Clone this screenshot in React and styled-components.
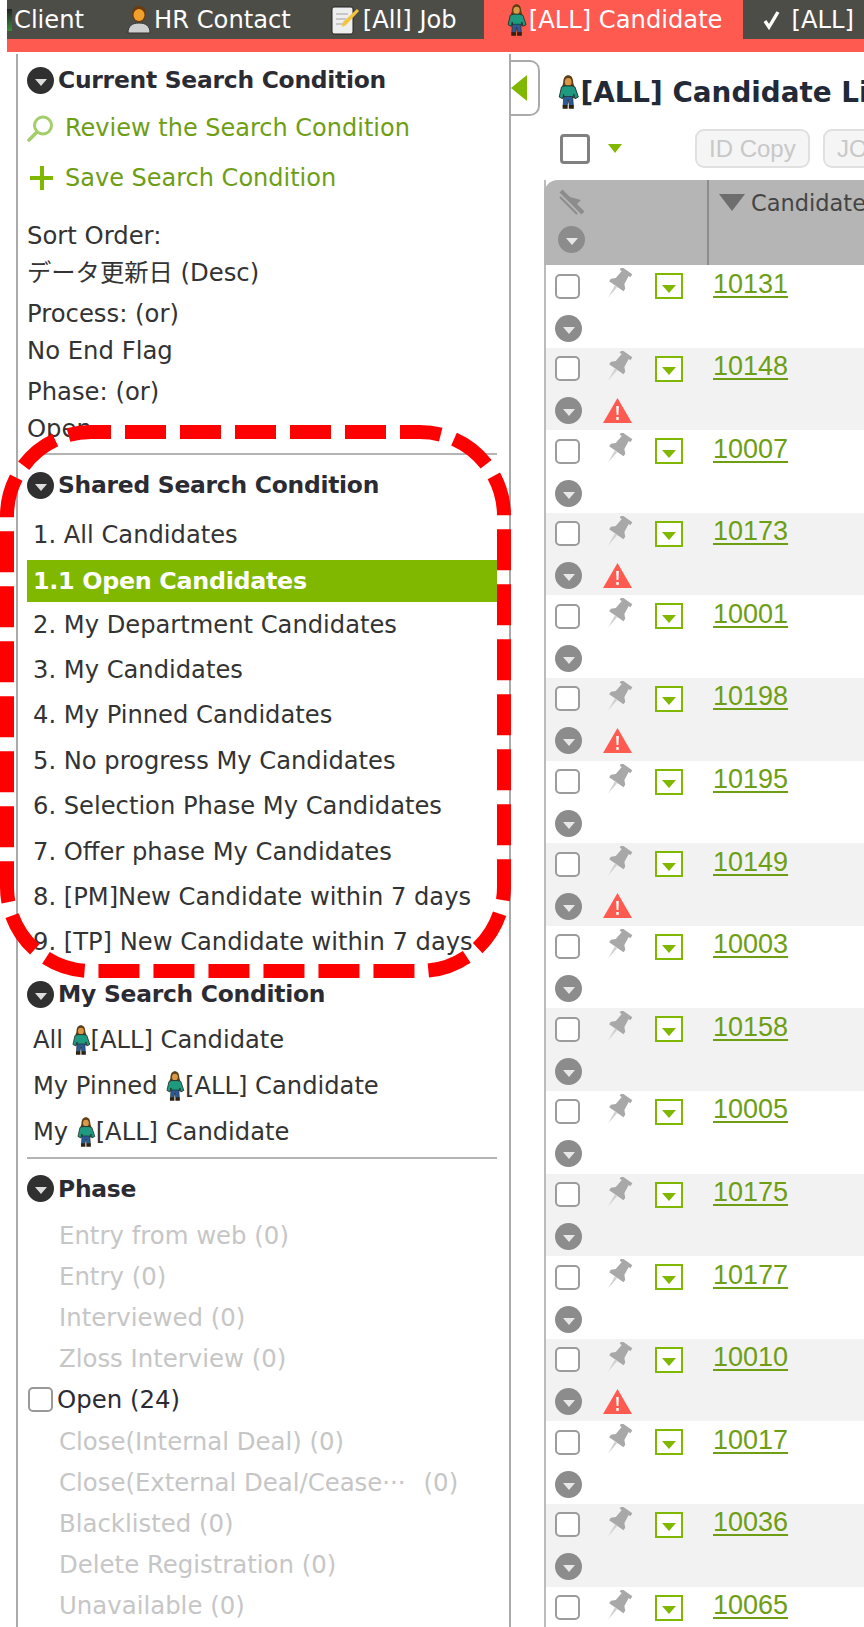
import React from "react";
import styled, { createGlobalStyle } from "styled-components";

const FONT = `"DejaVu Sans", "Noto Sans CJK JP", sans-serif`;

const GlobalStyle = createGlobalStyle`
  html, body {
    margin: 0;
    padding: 0;
    background: #fff;
  }
`;

const Page = styled.div`
  position: relative;
  width: 864px;
  height: 1627px;
  overflow: hidden;
  background: #fff;
  font-family: ${FONT};
  color: #333;
`;

/* top navigation */
const TopBar = styled.div`
  margin-left: 7px;
  border-bottom: 13px solid #ff5a50;
  background: #4d4d48;
`;

const TabRow = styled.div`
  display: flex;
  height: 39px;
  overflow: hidden;
`;

const Tab = styled.div`
  flex: none;
  display: flex;
  align-items: center;
  gap: ${(p) => p.$gap || 3}px;
  height: 39px;
  padding: 0 ${(p) => p.$right || 43}px 0 ${(p) => p.$left || 0}px;
  background: ${(p) => (p.$active ? "#ff5a50" : "transparent")};
  color: #fff;
  font-size: 24.2px;
  white-space: nowrap;
`;

const ClientMark = styled.span`
  width: 5px;
  height: 22px;
  background: linear-gradient(#222, #3a8a3a);
`;

/* layout */
const Body = styled.div`
  display: flex;
  align-items: flex-start;
`;

const Sidebar = styled.aside`
  flex: none;
  box-sizing: border-box;
  width: 495px;
  height: 1573px;
  margin: 2px 0 0 16px;
  padding: 4px 12px 0 9px;
  border-left: 2px solid #aaa;
  border-right: 2px solid #aaa;
  overflow: hidden;
`;

const Heading = styled.div`
  display: flex;
  align-items: center;
  gap: 4px;
  height: 44px;
  margin-top: ${(p) => p.$top || 0}px;
  margin-bottom: ${(p) => p.$bottom || 1}px;
  font-size: 23.4px;
  font-weight: bold;
  letter-spacing: -0.25px;
  color: #2b2b33;
  white-space: nowrap;
`;

const ToggleCircle = styled.span`
  flex: none;
  display: flex;
  align-items: center;
  justify-content: center;
  width: 27px;
  height: 27px;
  border-radius: 50%;
  background: ${(p) => p.$color || "#303030"};

  &::after {
    content: "";
    margin-top: 4px;
    border-left: 6px solid transparent;
    border-right: 6px solid transparent;
    border-top: 7px solid ${(p) => p.$arrow || "#ddd"};
  }
`;

const ActionRow = styled.div`
  display: flex;
  align-items: center;
  gap: 11px;
  height: 50px;
  color: #6e9e14;
  font-size: 24px;
  white-space: nowrap;
`;

const ConditionGroup = styled.div`
  margin-top: ${(p) => p.$top || 4}px;
`;

const ConditionLine = styled.div`
  height: 37px;
  line-height: 37px;
  font-size: 24.3px;
  white-space: nowrap;
`;

const Divider = styled.hr`
  height: 2px;
  margin: ${(p) => p.$top || 6}px 0 ${(p) => p.$bottom || 8}px;
  border: 0;
  background: #b4b4b4;
`;

const SavedRow = styled.div`
  display: flex;
  align-items: center;
  box-sizing: border-box;
  height: ${(p) => p.$h || 45.4}px;
  margin-top: ${(p) => p.$top || 0}px;
  padding-left: 6px;
  font-size: 24.2px;
  white-space: nowrap;
  ${(p) =>
    p.$active &&
    `
    background: #80b800;
    color: #fff;
    font-weight: bold;
    font-size: 23.8px;
    letter-spacing: -0.3px;
  `}
`;

const PhaseRow = styled.div`
  display: flex;
  align-items: center;
  gap: 4px;
  height: 41.2px;
  padding-left: ${(p) => (p.$enabled ? 1 : 32)}px;
  color: ${(p) => (p.$enabled ? "#2b2b33" : "#c6c6c6")};
  font-size: 24.4px;
  white-space: nowrap;
`;

const TruncGap = styled.span`
  margin-left: 18px;
`;

const CheckBox = styled.span`
  flex: none;
  box-sizing: border-box;
  display: block;
  width: ${(p) => p.$size || 25}px;
  height: ${(p) => p.$size || 25}px;
  border: ${(p) => p.$line || 2}px solid ${(p) => p.$color || "#999"};
  border-radius: ${(p) => p.$radius || 5}px;
  background: #fff;
`;

/* main column */
const Main = styled.main`
  position: relative;
  flex: 1;
  min-width: 0;
  padding: 22px 0 0 33px;
  overflow: hidden;
  height: 1553px;
`;

const CollapseHandle = styled.div`
  position: absolute;
  top: 8px;
  left: -2px;
  display: flex;
  align-items: center;
  box-sizing: border-box;
  width: 31px;
  height: 56px;
  padding-left: 2px;
  background: #fff;
  border: 2px solid #aaa;
  border-left: 0;
  border-radius: 0 10px 10px 0;

  &::before {
    content: "";
    border-top: 13px solid transparent;
    border-bottom: 13px solid transparent;
    border-right: 16px solid #80b800;
  }
`;

const TitleRow = styled.h1`
  display: flex;
  align-items: center;
  gap: 1px;
  height: 36px;
  margin: 0 0 0 13px;
  font-size: 27.8px;
  font-weight: bold;
  color: #222a38;
  white-space: nowrap;
`;

const Toolbar = styled.div`
  display: flex;
  align-items: center;
  height: 39px;
  margin: 19px 0 12px 16px;
`;

const MenuArrow = styled.span`
  margin: 0 73px 0 18px;
  border-left: 7px solid transparent;
  border-right: 7px solid transparent;
  border-top: 9px solid #80b800;
`;

const GhostButton = styled.button`
  flex: none;
  box-sizing: border-box;
  height: 39px;
  min-width: 115px;
  margin-right: 13px;
  padding: 0 12px;
  background: #f5f5f5;
  border: 2px solid #e0e0e0;
  border-radius: 9px;
  color: #c8c8c8;
  font-family: "Liberation Sans", sans-serif;
  font-size: 24px;
  text-align: left;
`;

const Table = styled.div`
  width: 320px;
  border-left: 2px solid #bbb;
  box-sizing: border-box;
`;

const HeaderRow = styled.div`
  display: flex;
  height: 85px;
  margin-left: -2px;
  background: #b5b5b5;
  border-radius: 14px 0 0 0;
`;

const HeaderIcons = styled.div`
  flex: none;
  display: flex;
  flex-direction: column;
  gap: 10px;
  box-sizing: border-box;
  width: 165px;
  padding: 8px 0 0 14px;
  border-right: 2px solid #8c8c8c;
`;

const HeaderLabel = styled.div`
  display: flex;
  gap: 6px;
  padding: 10px 0 0 10px;
  color: #444;
  font-size: 22.5px;
  white-space: nowrap;
  &::before {
    content: "";
    margin-top: 4px;
    height: 0;
    border-left: 13px solid transparent;
    border-right: 13px solid transparent;
    border-top: 17px solid #6e6e6e;
  }
`;

const Row = styled.div`
  display: flex;
  box-sizing: border-box;
  height: 82.6px;
  background: ${(p) => (p.$alt ? "#f2f2f2" : "#fff")};
`;

const RowTools = styled.div`
  flex: none;
  display: grid;
  grid-template-columns: 49px 51px 34px;
  grid-template-rows: 40px 36px;
  row-gap: 4px;
  align-items: center;
  box-sizing: border-box;
  width: 163px;
  padding: 1px 0 0 9px;
`;

const RowMenu = styled.span`
  display: flex;
  align-items: center;
  justify-content: center;
  box-sizing: border-box;
  width: 28px;
  height: 26px;
  border: 2px solid #80b800;
  background: #fff;

  &::after {
    content: "";
    margin-top: 5px;
    border-left: 7px solid transparent;
    border-right: 7px solid transparent;
    border-top: 8px solid #80b800;
  }
`;

const IdCell = styled.a`
  margin: 3.5px 0 0 4px;
  align-self: flex-start;
  color: #6e9e14;
  font-family: "Liberation Sans", sans-serif;
  font-size: 27px;
  line-height: 31px;
  text-decoration: underline;
  text-decoration-thickness: 2px;
  text-underline-offset: 3px;
`;

/* the hand drawn dashed marker on top of the sidebar */
const Marker = styled.svg`
  position: absolute;
  top: 0;
  left: 0;
  pointer-events: none;
`;

function Person({ height = 30 }) {
  return (
    <svg width={height * 0.66} height={height} viewBox="0 0 20 30" style={{ flex: "none" }}>
      <path d="M5.5 7c0-5 2-7 4.5-7s4.500 2 4.500 7l1 3h-11z" fill="#5c3f16" />
      <ellipse cx="10" cy="6" rx="3" ry="3.500" fill="#d9984a" />
      <path d="M4 10.500l3-1h6l3 1 3 9-3 1.500-1-4v3H6v-3l-1 4-3-1.500z" fill="#1f9a80" stroke="#1c2a22" strokeWidth=".8" />
      <path d="M6 19h8l.5 8h-3.500L10 22l-1 5H5.500z" fill="#2c5a96" stroke="#1c2a22" strokeWidth=".6" />
      <path d="M5 26.500h4.500v3.500H5zM10.500 26.500H15v3.500h-4.500z" fill="#2e2210" />
    </svg>
  );
}

function ContactIcon() {
  return (
    <svg width="24" height="29" viewBox="0 0 24 29" style={{ flex: "none" }}>
      <path d="M5 9c0-6 3-8 7-8s7 2 7 8c0 5-3 8-7 8S5 14 5 9z" fill="#6a3c10" />
      <ellipse cx="12" cy="10" rx="5.500" ry="6" fill="#f2a02c" />
      <path d="M1 28c0-7 4-10 11-10s11 3 11 10z" fill="#cfcfcf" stroke="#333" />
    </svg>
  );
}

function MemoIcon() {
  return (
    <svg width="28" height="30" viewBox="0 0 28 30" style={{ flex: "none" }}>
      <rect x="1" y="2" width="21" height="27" rx="2" fill="#eee" stroke="#222" />
      <path d="M5 9h12M5 14h10M5 19h8" stroke="#bbb" strokeWidth="1.500" />
      <path d="M26 4l2 2-13 14-4 2 1-5z" fill="#f2c53c" />
    </svg>
  );
}

function CheckMark() {
  return (
    <svg width="18" height="20" viewBox="0 0 18 20" style={{ flex: "none" }}>
      <path d="M2 11l4 6L15 2" fill="none" stroke="#fff" strokeWidth="3.400" />
    </svg>
  );
}

function SearchGlass() {
  return (
    <svg width="27" height="27" viewBox="0 0 27 27" style={{ flex: "none" }}>
      <circle cx="16" cy="10.500" r="8.500" fill="none" stroke="#a3cf6b" strokeWidth="3" />
      <path d="M10 17L2 25" stroke="#a3cf6b" strokeWidth="3.600" strokeLinecap="round" />
    </svg>
  );
}

function PlusMark() {
  return (
    <svg width="27" height="24" viewBox="0 0 27 24" style={{ flex: "none" }}>
      <path d="M15 0v24M3 12h23" stroke="#80b800" strokeWidth="4" />
    </svg>
  );
}

function PinMark() {
  return (
    <svg width="30" height="34" viewBox="0 0 30 34" style={{ marginTop: -2 }}>
      <g transform="rotate(35 15 14)">
        <path d="M8.500 0h13v3.500h-2l1 9 3.500 3.500v3H6.500v-3l3.500-3.500 1-9h-2.500z" fill="#a8a8a8" />
        <path d="M13.500 19h3l-1.500 14z" fill="#d2d2d2" />
      </g>
    </svg>
  );
}

function AlertMark() {
  return (
    <svg width="29" height="26" viewBox="0 0 29 26" style={{ marginLeft: -1 }}>
      <path d="M14.500 0L29 25H0z" fill="#ff5a50" />
      <path d="M13.200 8h2.600l-.4 9h-1.800zM13.300 19h2.400v3h-2.400z" fill="#fff" />
    </svg>
  );
}

function NoPinMark() {
  return (
    <svg width="28" height="28" viewBox="0 0 28 28">
      <path d="M3 3l22 22" stroke="#8c8c8c" strokeWidth="4" />
      <path d="M8 8l15 4-5 5z" fill="#8c8c8c" />
      <path d="M2 9l17 17" stroke="#8c8c8c" strokeWidth="2" />
    </svg>
  );
}

const savedSearches = [
  "2. My Department Candidates",
  "3. My Candidates",
  "4. My Pinned Candidates",
  "5. No progress My Candidates",
  "6. Selection Phase My Candidates",
  "7. Offer phase My Candidates",
  "8. [PM]New Candidate within 7 days",
  "9. [TP] New Candidate within 7 days",
];

const candidates = [
  ["10131", false],
  ["10148", true],
  ["10007", false],
  ["10173", true],
  ["10001", false],
  ["10198", true],
  ["10195", false],
  ["10149", true],
  ["10003", false],
  ["10158", false],
  ["10005", false],
  ["10175", false],
  ["10177", false],
  ["10010", true],
  ["10017", false],
  ["10036", false],
  ["10065", false],
];

export default function App() {
  return (
    <Page>
      <GlobalStyle />
      <TopBar>
        <TabRow>
          <Tab $gap={2}>
            <ClientMark />
            Client
          </Tab>
          <Tab $right={40}>
            <ContactIcon />
            HR Contact
          </Tab>
          <Tab $right={27} $gap={4}>
            <MemoIcon />
            [All] Job
          </Tab>
          <Tab $active $left={22} $right={20} $gap={2}>
            <Person height={32} />
            [ALL] Candidate
          </Tab>
          <Tab $left={20} $gap={11}>
            <CheckMark />
            [ALL]
          </Tab>
        </TabRow>
      </TopBar>

      <Body>
        <Sidebar>
          <Heading>
            <ToggleCircle />
            Current Search Condition
          </Heading>
          <ActionRow>
            <SearchGlass />
            Review the Search Condition
          </ActionRow>
          <ActionRow>
            <PlusMark />
            Save Search Condition
          </ActionRow>
          <ConditionGroup $top={14}>
            <ConditionLine>Sort Order:</ConditionLine>
            <ConditionLine>データ更新日 (Desc)</ConditionLine>
          </ConditionGroup>
          <ConditionGroup>
            <ConditionLine>Process: (or)</ConditionLine>
            <ConditionLine>No End Flag</ConditionLine>
          </ConditionGroup>
          <ConditionGroup>
            <ConditionLine>Phase: (or)</ConditionLine>
            <ConditionLine>Open</ConditionLine>
          </ConditionGroup>
          <Divider />

          <Heading>
            <ToggleCircle />
            Shared Search Condition
          </Heading>
          <SavedRow $top={6} $h={44}>
            1. All Candidates
          </SavedRow>
          <SavedRow $active $top={3} $h={42}>
            1.1 Open Candidates
          </SavedRow>
          {savedSearches.map((name) => (
            <SavedRow key={name}>{name}</SavedRow>
          ))}

          <Heading $top={7}>
            <ToggleCircle />
            My Search Condition
          </Heading>
          <SavedRow $h={45.8}>
            All&nbsp;
            <Person />
            [ALL] Candidate
          </SavedRow>
          <SavedRow $h={45.8}>
            My Pinned&nbsp;
            <Person />
            [ALL] Candidate
          </SavedRow>
          <SavedRow $h={45.8}>
            My&nbsp;
            <Person />
            [ALL] Candidate
          </SavedRow>
          <Divider $top={2} $bottom={8} />

          <Heading $bottom={4}>
            <ToggleCircle />
            Phase
          </Heading>
          <PhaseRow>Entry from web (0)</PhaseRow>
          <PhaseRow>Entry (0)</PhaseRow>
          <PhaseRow>Interviewed (0)</PhaseRow>
          <PhaseRow>Zloss Interview (0)</PhaseRow>
          <PhaseRow $enabled>
            <CheckBox />
            Open (24)
          </PhaseRow>
          <PhaseRow>Close(Internal Deal) (0)</PhaseRow>
          <PhaseRow>
            <span>
              Close(External Deal/Cease···
              <TruncGap>(0)</TruncGap>
            </span>
          </PhaseRow>
          <PhaseRow>Blacklisted (0)</PhaseRow>
          <PhaseRow>Delete Registration (0)</PhaseRow>
          <PhaseRow>Unavailable (0)</PhaseRow>
        </Sidebar>

        <Main>
          <CollapseHandle />
          <TitleRow>
            <Person height={34} />
            [ALL] Candidate List
          </TitleRow>
          <Toolbar>
            <CheckBox $size={30} $line={3} $color="#808080" $radius={4} />
            <MenuArrow />
            <GhostButton>ID Copy</GhostButton>
            <GhostButton>JOB</GhostButton>
          </Toolbar>
          <Table>
            <HeaderRow>
              <HeaderIcons>
                <NoPinMark />
                <ToggleCircle $color="#8c8c8c" $arrow="#e8e8e8" />
              </HeaderIcons>
              <HeaderLabel>Candidate</HeaderLabel>
            </HeaderRow>
            {candidates.map(([id, alert], i) => (
              <Row key={id} $alt={i % 2 === 1}>
                <RowTools>
                  <CheckBox $color="#9c9c9c" />
                  <PinMark />
                  <RowMenu />
                  <ToggleCircle $color="#8c8c8c" $arrow="#e8e8e8" />
                  {alert && <AlertMark />}
                </RowTools>
                <IdCell>{id}</IdCell>
              </Row>
            ))}
          </Table>
        </Main>
      </Body>

      <Marker width="864" height="1627">
        <rect
          x="7"
          y="432"
          width="497"
          height="539"
          rx="84"
          fill="none"
          stroke="#ff0000"
          strokeWidth="14"
          strokeDasharray="41 14"
          strokeDashoffset="21"
        />
      </Marker>
    </Page>
  );
}
